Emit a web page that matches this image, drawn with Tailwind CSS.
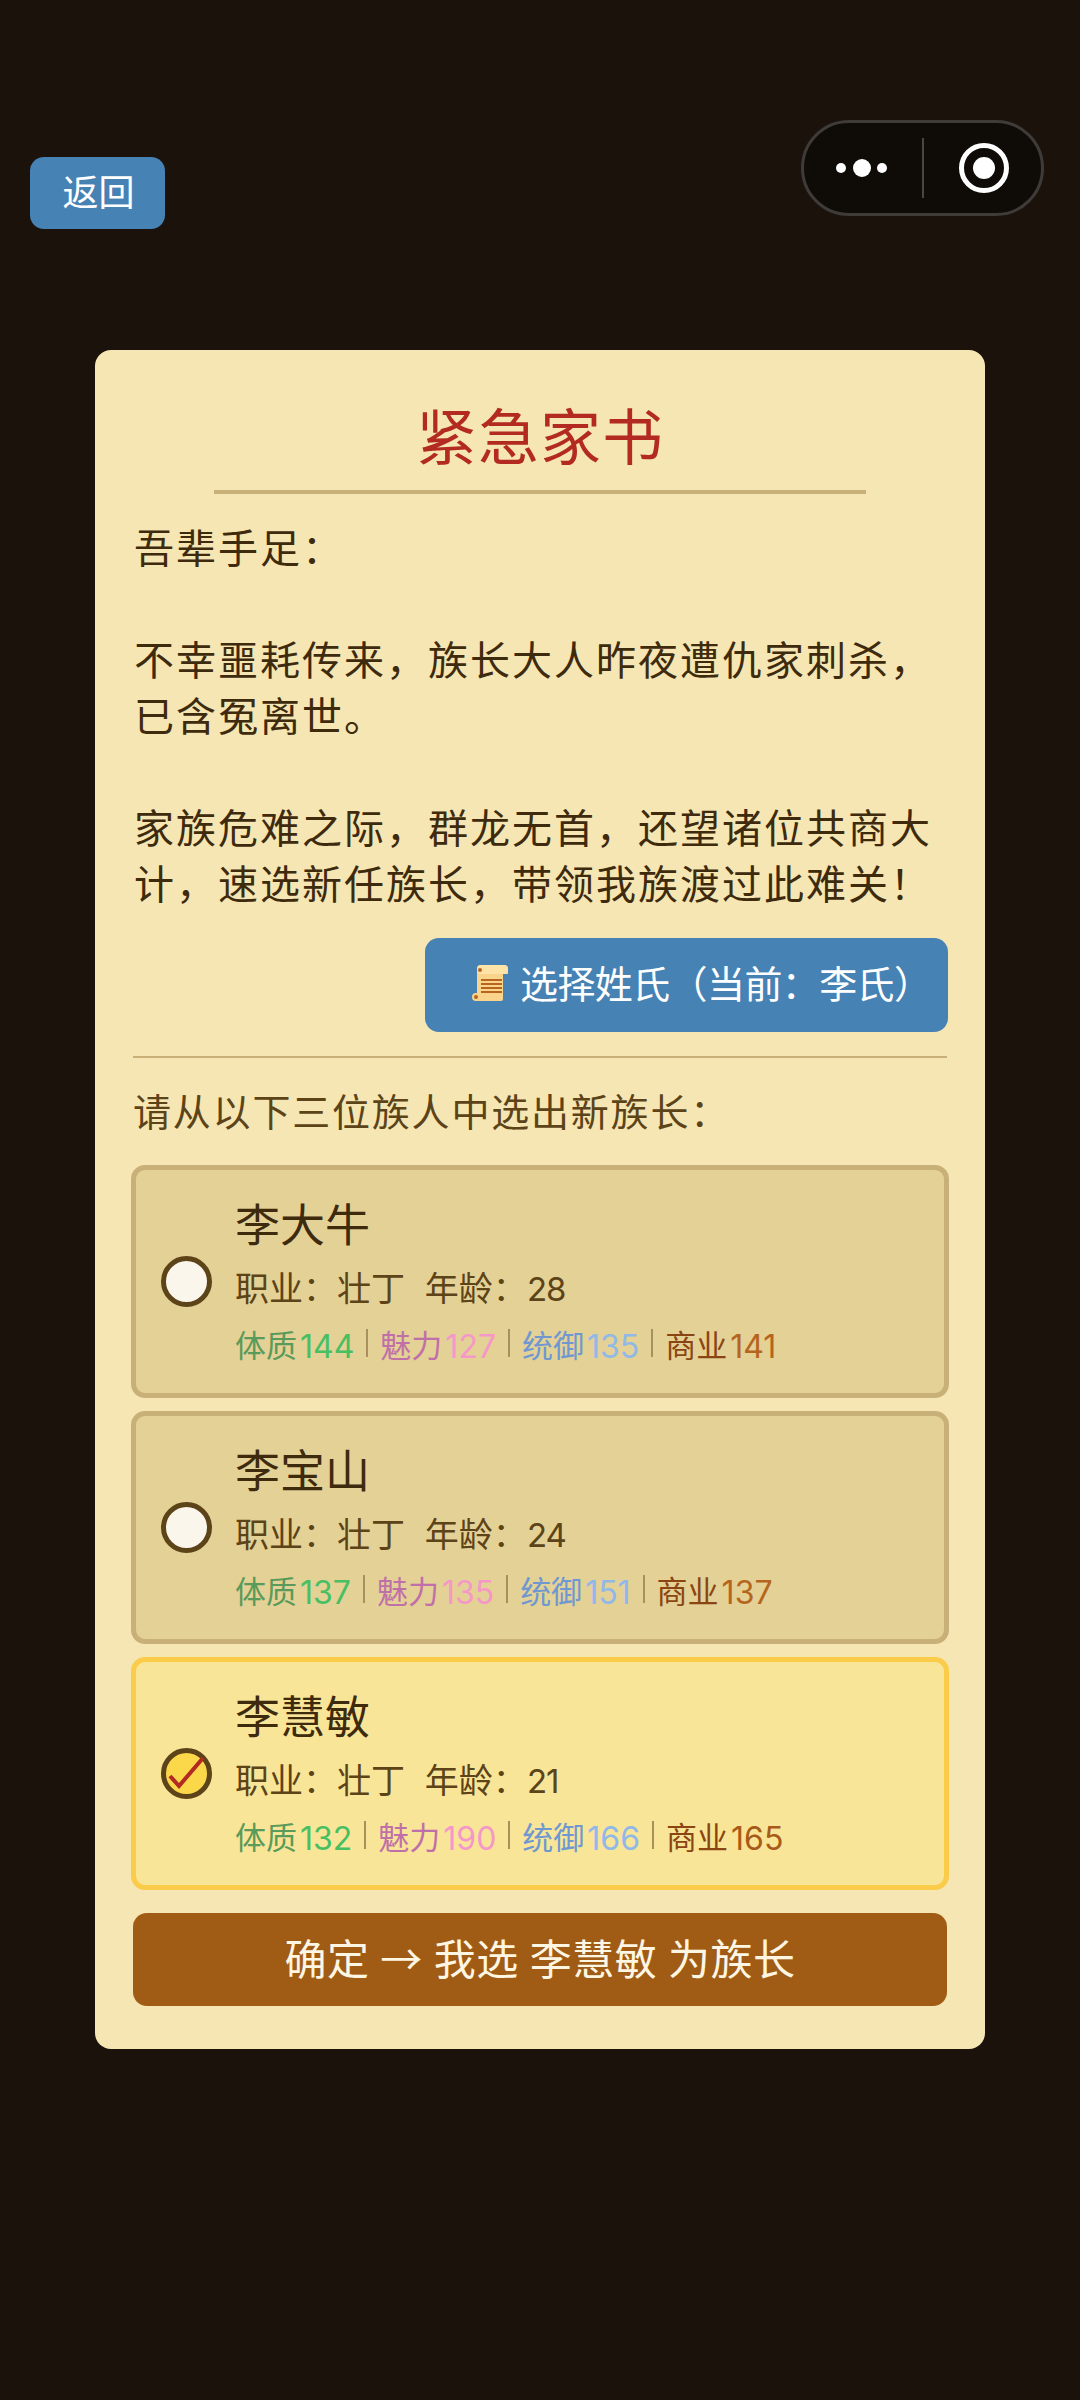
<!doctype html>
<html lang="zh">
<head>
<meta charset="utf-8">
<script src="https://cdn.jsdelivr.net/npm/@tailwindcss/browser@4"></script>
</head>
<body class="m-0">
<div class="relative w-[1080px] h-[2400px] bg-[#1a120b] overflow-hidden font-['Roboto','Noto_Sans_CJK_SC',sans-serif]">
  <div class="absolute left-[801px] top-[120px] w-[243px] h-[96px] rounded-[48px] border-[3px] border-[#3f3b38] bg-[#0f0b07] flex items-center">
    <svg width="237" height="90" viewBox="0 0 237 90" class="block">
      <circle cx="37" cy="45" r="5" fill="#fff"/><circle cx="58" cy="45" r="9" fill="#fff"/><circle cx="78" cy="45" r="5" fill="#fff"/>
      <rect x="118" y="15" width="2" height="60" fill="#4a4642"/>
      <circle cx="180" cy="45" r="22.5" fill="none" stroke="#fff" stroke-width="5"/><circle cx="180" cy="45" r="11" fill="#fff"/>
    </svg>
  </div>
  <div class="pt-[157px] pl-[30px]">
    <div class="w-[135px] h-[72px] rounded-[14px] bg-[#4682b4] text-white text-[36px] leading-[72px] text-center pl-[2px] pt-[1px]">返回</div>
  </div>
  <div class="mt-[121px] ml-[95px] w-[890px] h-[1699px] rounded-[16px] bg-[#f5e6b3] px-[38px] pt-[39px]">
    <div class="text-center text-[61px] leading-[100px] tracking-[1px] text-[#b22a22]">紧急家书</div>
    <div class="mx-auto mt-[1px] w-[652px] h-[4px] bg-[#c9b078]"></div>
    <div class="mt-[28px] pl-[1px] text-[40px] leading-[56px] tracking-[2px] text-[#3e2a0d]">
      <p>吾辈手足：</p>
      <p class="mt-[56px]">不幸噩耗传来，族长大人昨夜遭仇家刺杀，已含冤离世。</p>
      <p class="mt-[56px]">家族危难之际，群龙无首，还望诸位共商大计，速选新任族长，带领我族渡过此难关！</p>
    </div>
    <div class="mt-[24px] mr-[-1px] flex justify-end">
      <div class="w-[523px] h-[94px] rounded-[14px] bg-[#4682b4] text-white flex items-center justify-start pl-[47px] gap-[12px] text-[38px]">
        <svg width="36" height="37" viewBox="0 0 36 37" class="shrink-0 -mt-[3px]">
          <path d="M5 4a4 4 0 0 1 4-4h23a4 4 0 0 1 4 4v5h-5v25a2 2 0 0 1-2 2H4a4 4 0 0 1 0-8h1z" fill="#fbd48c"/>
          <rect x="5" y="0" width="31" height="9" rx="4" fill="#fde3a6"/>
          <circle cx="8" cy="5" r="2" fill="#b8651f"/><circle cx="4" cy="32" r="2" fill="#b8651f"/>
          <path d="M9 15h21M9 19h21M9 23h21M9 27h21" stroke="#b8651f" stroke-width="2"/>
        </svg>
        <span class="tracking-[-0.6px]">选择姓氏（当前：李氏）</span>
      </div>
    </div>
    <div class="mt-[24px] h-[2px] bg-[#c9b078]"></div>
    <div class="mt-[27px] text-[38px] leading-[56px] tracking-[1.8px] text-[#5c4318]">请从以下三位族人中选出新族长：</div>
    <div class="mt-[24px] mx-[-2px] flex flex-col gap-[13px]">
      <div class="h-[233px] rounded-[14px] border-[5px] border-[#c9b078] bg-[#e4d196] pl-[25px] flex items-center gap-[23px]">
        <div class="w-[51px] h-[51px] rounded-full border-[5px] border-[#5c4318] bg-[#fbf6ec] shrink-0"></div>
        <div class="flex flex-col pt-[4px]">
          <div class="text-[45px] leading-[60px] text-[#3e2a0d]">李大牛</div>
          <div class="mt-[6px] text-[34px] leading-[52px] text-[#5c4318]">职业：壮丁<span class="ml-[3px]">&nbsp; 年龄：<span class="font-['Inter'] text-[33px] tracking-[-1px]">28</span></span></div>
          <div class="mt-[8px] text-[31px] leading-[48px] flex items-center whitespace-nowrap">
            <span class="text-[#5a9a5a]">体质</span><span class="ml-[3px] font-['Inter'] text-[32px] text-[#47bf62]">144</span>
            <span class="mx-[12px] w-[2px] h-[28px] -mt-[8px] bg-[#a8905e]"></span>
            <span class="text-[#c070a8]">魅力</span><span class="ml-[3px] font-['Inter'] text-[32px] text-[#f598c8]">127</span>
            <span class="mx-[12px] w-[2px] h-[28px] -mt-[8px] bg-[#a8905e]"></span>
            <span class="text-[#7098d0]">统御</span><span class="ml-[3px] font-['Inter'] text-[32px] text-[#90b8e8]">135</span>
            <span class="mx-[12px] w-[2px] h-[28px] -mt-[8px] bg-[#a8905e]"></span>
            <span class="text-[#8b4513]">商业</span><span class="ml-[3px] font-['Inter'] text-[32px] text-[#b5651d]">141</span>
          </div>
        </div>
      </div>
      <div class="h-[233px] rounded-[14px] border-[5px] border-[#c9b078] bg-[#e4d196] pl-[25px] flex items-center gap-[23px]">
        <div class="w-[51px] h-[51px] rounded-full border-[5px] border-[#5c4318] bg-[#fbf6ec] shrink-0"></div>
        <div class="flex flex-col pt-[4px]">
          <div class="text-[45px] leading-[60px] text-[#3e2a0d]">李宝山</div>
          <div class="mt-[6px] text-[34px] leading-[52px] text-[#5c4318]">职业：壮丁<span class="ml-[3px]">&nbsp; 年龄：<span class="font-['Inter'] text-[33px] tracking-[-1px]">24</span></span></div>
          <div class="mt-[8px] text-[31px] leading-[48px] flex items-center whitespace-nowrap">
            <span class="text-[#5a9a5a]">体质</span><span class="ml-[3px] font-['Inter'] text-[32px] text-[#47bf62]">137</span>
            <span class="mx-[12px] w-[2px] h-[28px] -mt-[8px] bg-[#a8905e]"></span>
            <span class="text-[#c070a8]">魅力</span><span class="ml-[3px] font-['Inter'] text-[32px] text-[#f598c8]">135</span>
            <span class="mx-[12px] w-[2px] h-[28px] -mt-[8px] bg-[#a8905e]"></span>
            <span class="text-[#7098d0]">统御</span><span class="ml-[3px] font-['Inter'] text-[32px] text-[#90b8e8]">151</span>
            <span class="mx-[12px] w-[2px] h-[28px] -mt-[8px] bg-[#a8905e]"></span>
            <span class="text-[#8b4513]">商业</span><span class="ml-[3px] font-['Inter'] text-[32px] text-[#b5651d]">137</span>
          </div>
        </div>
      </div>
      <div class="h-[233px] rounded-[14px] border-[5px] border-[#fbcb4a] bg-[#f9e597] pl-[25px] flex items-center gap-[23px]">
        <div class="w-[51px] h-[51px] rounded-full border-[5px] border-[#5c4318] bg-[#fbd84a] shrink-0 flex items-center justify-center">
          <svg width="41" height="41" viewBox="0 0 41 41"><path d="M4 23l9 10L37 5" fill="none" stroke="#b22a22" stroke-width="4"/></svg>
        </div>
        <div class="flex flex-col pt-[4px]">
          <div class="text-[45px] leading-[60px] text-[#3e2a0d]">李慧敏</div>
          <div class="mt-[6px] text-[34px] leading-[52px] text-[#5c4318]">职业：壮丁<span class="ml-[3px]">&nbsp; 年龄：<span class="font-['Inter'] text-[33px] tracking-[-1px]">21</span></span></div>
          <div class="mt-[8px] text-[31px] leading-[48px] flex items-center whitespace-nowrap">
            <span class="text-[#5a9a5a]">体质</span><span class="ml-[3px] font-['Inter'] text-[32px] text-[#47bf62]">132</span>
            <span class="mx-[12px] w-[2px] h-[28px] -mt-[8px] bg-[#a8905e]"></span>
            <span class="text-[#c070a8]">魅力</span><span class="ml-[3px] font-['Inter'] text-[32px] text-[#f598c8]">190</span>
            <span class="mx-[12px] w-[2px] h-[28px] -mt-[8px] bg-[#a8905e]"></span>
            <span class="text-[#7098d0]">统御</span><span class="ml-[3px] font-['Inter'] text-[32px] text-[#90b8e8]">166</span>
            <span class="mx-[12px] w-[2px] h-[28px] -mt-[8px] bg-[#a8905e]"></span>
            <span class="text-[#8b4513]">商业</span><span class="ml-[3px] font-['Inter'] text-[32px] text-[#a85a18]">165</span>
          </div>
        </div>
      </div>
    </div>
    <div class="mt-[23px] h-[93px] rounded-[14px] bg-[#a05c14] text-[#fdf6e3] text-[42px] leading-[93px] text-center pt-[1px] tracking-[0.5px]">确定 → 我选 李慧敏 为族长</div>
  </div>
</div>
</body>
</html>
